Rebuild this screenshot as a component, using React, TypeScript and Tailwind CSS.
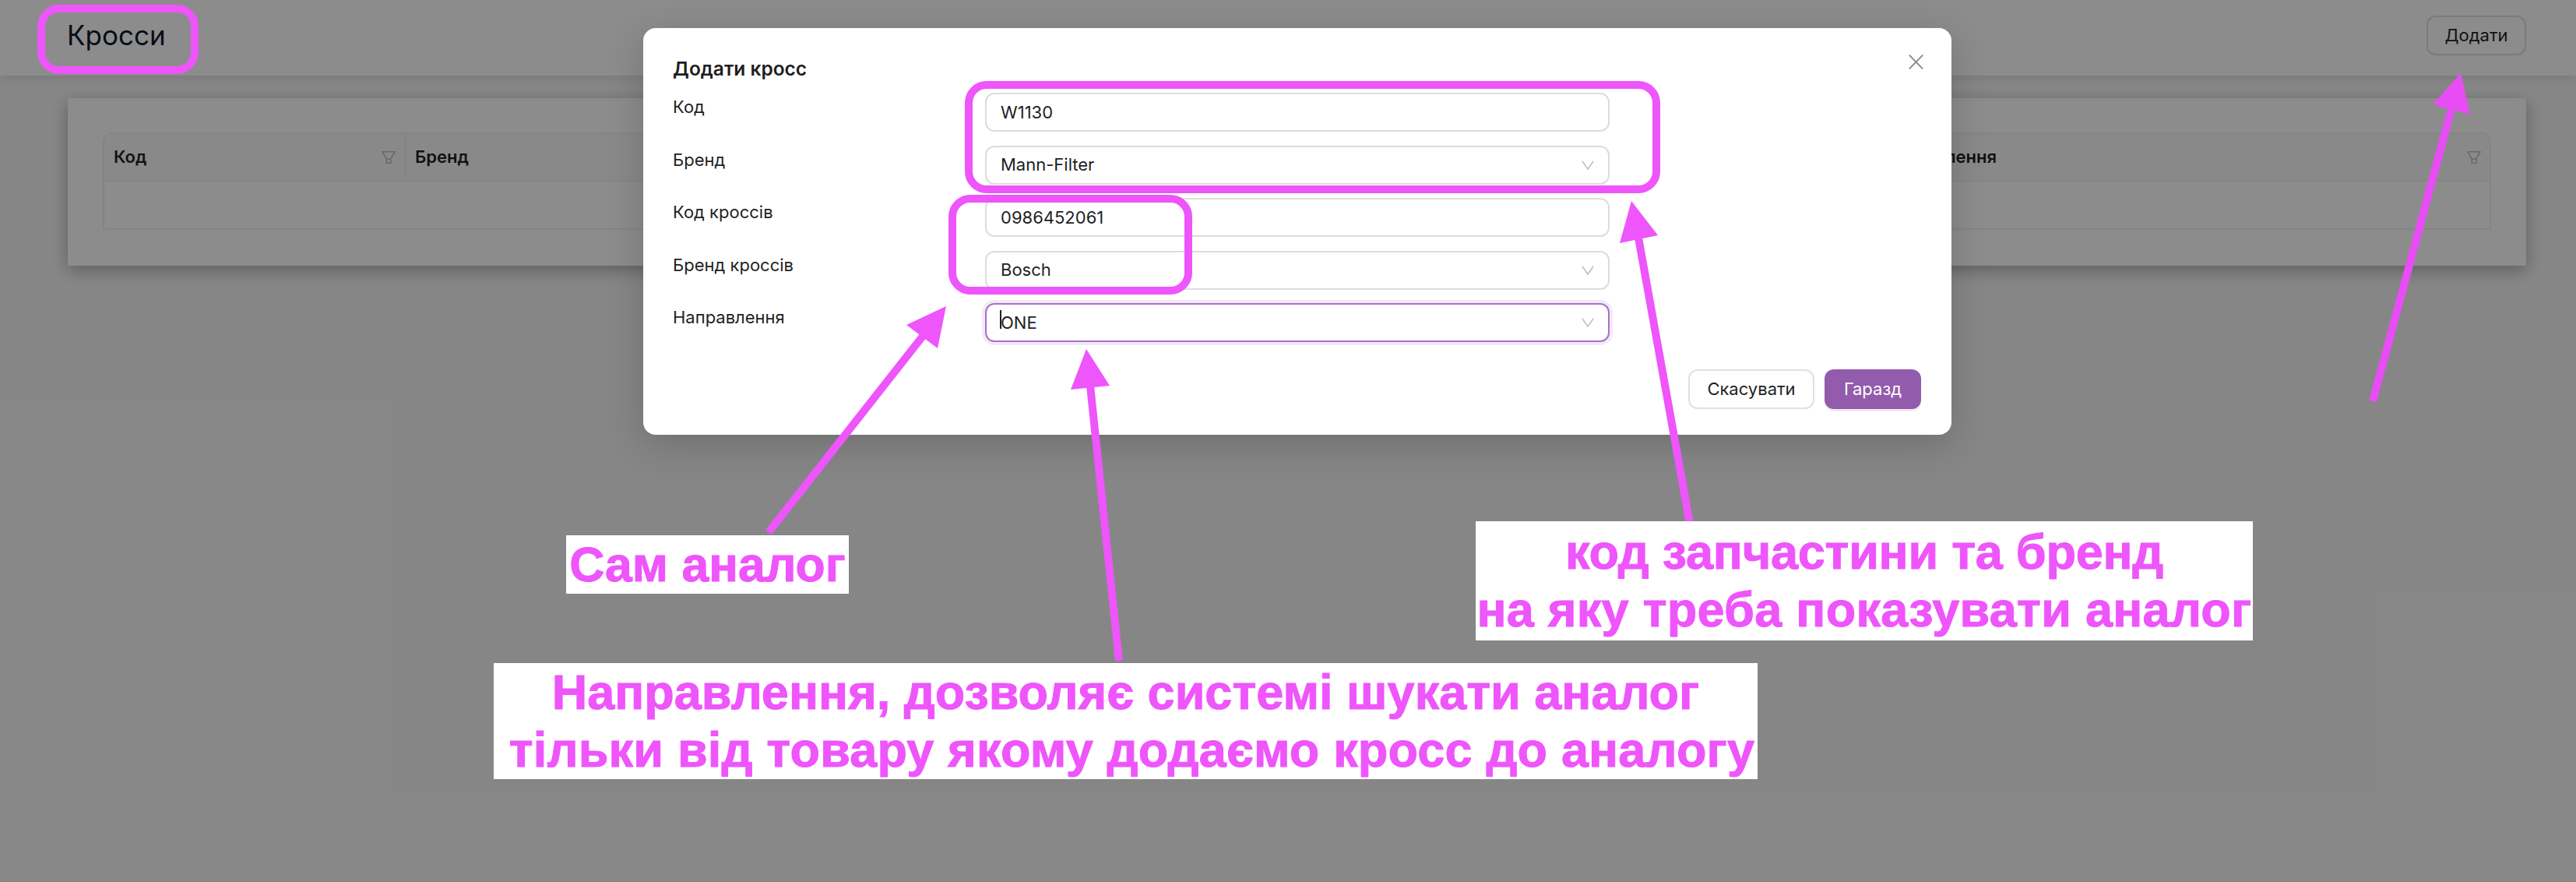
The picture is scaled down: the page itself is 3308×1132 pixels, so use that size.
import { ReactNode } from 'react';

const PINK = '#ee55fb';

function FilterIcon() {
  return (
    <svg viewBox="64 64 896 896" className="w-[20px] h-[20px] fill-[#bfbfbf] shrink-0">
      <path d="M880.1 154H143.9c-24.5 0-39.8 26.7-27.5 48L349 597.4V838c0 17.7 14.2 32 31.8 32h262.4c17.6 0 31.8-14.3 31.8-32V597.4L907.7 202c12.2-21.3-3.1-48-27.6-48zM603.4 798H420.6V642h182.9v156zm9.6-236.6l-9.5 16.6h-183l-9.5-16.6L212.7 226h598.6L613 561.4z" />
    </svg>
  );
}

function Chevron() {
  return (
    <svg viewBox="0 0 16 12" className="w-[16px] h-[12px] shrink-0">
      <path d="M0.8 0.8 L8 11 L15.2 0.8" fill="none" stroke="#bfbfbf" strokeWidth="1.6" />
    </svg>
  );
}

function Th({ children, filter, width, divider }: { children: string; filter?: boolean; width: string; divider?: boolean }) {
  return (
    <div className={`${width} h-full flex items-center justify-between pl-[12px] pr-[10px] ${divider ? 'border-r-2 border-[#f0f0f0]' : ''}`}>
      <span className="text-[22px] font-semibold text-[#1f1f1f]">{children}</span>
      {filter && <FilterIcon />}
    </div>
  );
}

function Field({ children, select, focused }: { children: ReactNode; select?: boolean; focused?: boolean }) {
  return (
    <div
      className={`h-[50px] flex items-center justify-between pl-[18px] pr-[18px] rounded-[12px] border-2 bg-white text-[22px] text-[#1f1f1f] ${
        focused ? 'border-[#a871c8] shadow-[0_0_0_4px_#f3e9f7]' : 'border-[#dcdcdc]'
      }`}
    >
      <span className="relative">{children}</span>
      {select && <Chevron />}
    </div>
  );
}

function Arrow({ line, head, color = PINK }: { line: number[]; head: string; color?: string }) {
  return (
    <>
      <line x1={line[0]} y1={line[1]} x2={line[2]} y2={line[3]} stroke={color} strokeWidth="10" />
      <polygon points={head} fill={color} />
    </>
  );
}

export default function App() {
  const labels = ['Код', 'Бренд', 'Код кроссів', 'Бренд кроссів', 'Направлення'];

  return (
    <div className="relative w-[3308px] h-[1132px] overflow-hidden bg-[#f5f5f5] font-['Inter',sans-serif]">
      {/* page under the mask */}
      <header className="h-[97px] bg-white flex items-center justify-between pl-[86px] pr-[64px] pb-[6px] shadow-[0_2px_12px_rgba(0,0,0,0.12)]">
        <h1 className="text-[35px] font-normal text-[#101828]">Кросси</h1>
        <button className="w-[128px] h-[51px] rounded-[12px] border-2 border-[#e0e0e0] bg-white text-[22px] text-[#1f1f1f] shadow-[0_2px_0_rgba(0,0,0,0.02)]">
          Додати
        </button>
      </header>
      <main className="pt-[29px] pl-[87px] pr-[64px]">
        <div className="bg-white pt-[44px] pb-[46px] px-[45px] shadow-[0_6px_20px_rgba(0,0,0,0.3)]">
          <div className="border-2 border-[#f0f0f0] rounded-t-[12px]">
            <div className="h-[61px] flex bg-[#fafafa] border-b-2 border-[#f0f0f0] rounded-t-[12px]">
              <Th width="w-[387px]" filter divider>Код</Th>
              <Th width="w-[628px]">Бренд</Th>
              <Th width="w-[628px]">Код кроссів</Th>
              <Th width="w-[628px]">Бренд кроссів</Th>
              <Th width="flex-1" filter>Направлення</Th>
            </div>
            <div className="h-[60px]" />
          </div>
        </div>
      </main>

      {/* modal */}
      <div className="absolute inset-0 bg-black/45 pt-[36px] pl-[826px]">
        <div className="relative w-[1680px] bg-white rounded-[16px] pt-[36px] pb-[33px] pl-[38px] pr-[39px] shadow-[0_12px_48px_rgba(0,0,0,0.18)]">
          <svg viewBox="0 0 19 19" className="absolute right-[36px] top-[34px] w-[19px] h-[19px]">
            <path d="M0.8 0.5 L18.2 18.5 M18.2 0.5 L0.8 18.5" stroke="#8c8c8c" strokeWidth="1.8" fill="none" />
          </svg>
          <h2 className="h-[32px] leading-[32px] text-[24.5px] font-semibold text-[#1f1f1f] mb-[15px]">Додати кросс</h2>
          <div className="flex flex-col gap-[17.5px] w-[1203px]">
            {labels.map((label, i) => (
              <div key={label} className="grid grid-cols-[401px_802px] h-[50px]">
                <label className="text-[22px] leading-[36px] text-[#1f1f1f]">{label}</label>
                {i === 0 && <Field>W1130</Field>}
                {i === 1 && <Field select>Mann-Filter</Field>}
                {i === 2 && <Field>0986452061</Field>}
                {i === 3 && <Field select>Bosch</Field>}
                {i === 4 && (
                  <Field select focused>
                    ONE
                    <span className="absolute left-[-1px] top-[0px] w-[1.5px] h-[24px] bg-[#1f1f1f]" />
                  </Field>
                )}
              </div>
            ))}
          </div>
          <div className="flex justify-end gap-[13px] mt-[35px]">
            <button className="w-[162px] h-[51px] rounded-[12px] border-2 border-[#e0e0e0] bg-white text-[22px] text-[#1f1f1f]">
              Скасувати
            </button>
            <button className="w-[124px] h-[51px] rounded-[12px] bg-[#935bab] text-[22px] text-white shadow-[0_3px_0_#f3e9f7]">
              Гаразд
            </button>
          </div>
        </div>
      </div>

      {/* annotations drawn over the screenshot */}
      <div className="absolute left-[48px] top-[6px] w-[207px] h-[89px] border-[10px] border-[#ee55fb] rounded-[28px]" />
      <div className="absolute left-[1239px] top-[104px] w-[893px] h-[144px] border-[10px] border-[#ee55fb] rounded-[28px]" />
      <div className="absolute left-[1218px] top-[250px] w-[313px] h-[128px] border-[10px] border-[#ee55fb] rounded-[28px]" />

      <svg viewBox="0 0 3308 1132" className="absolute inset-0 w-[3308px] h-[1132px] pointer-events-none">
        <Arrow line={[987, 683, 1190, 425]} head="1215,393 1164,417 1204,447" />
        <Arrow line={[1437, 848, 1400, 495]} head="1395,448 1375,500 1425,495" />
        <Arrow line={[2170, 672, 2104, 305]} head="2095,258 2080,312 2129,302" />
        <Arrow line={[3047, 515, 3148, 140]} head="3160,94 3124,134 3172,147" color="#e84df5" />
      </svg>

      <div className="absolute left-[727px] top-[687px] w-[363px] h-[75px] bg-white flex items-center justify-center font-['Liberation_Sans',sans-serif] font-bold text-[62.5px] [-webkit-text-stroke:1px_#ee55fb] text-[#ee55fb] whitespace-nowrap">
        Сам аналог
      </div>
      <div className="absolute left-[634px] top-[851px] w-[1623px] h-[149px] bg-white text-center font-['Liberation_Sans',sans-serif] font-bold text-[63px] leading-[74px] [-webkit-text-stroke:1px_#ee55fb] text-[#ee55fb] whitespace-nowrap">
        <div>Направлення, дозволяє системі шукати аналог</div>
        <div className="pl-[16px] tracking-[0.17px]">тільки від товару якому додаємо кросс до аналогу</div>
      </div>
      <div className="absolute left-[1895px] top-[669px] w-[998px] h-[153px] bg-white text-center pt-[2px] font-['Liberation_Sans',sans-serif] font-bold text-[63px] leading-[74px] [-webkit-text-stroke:1px_#ee55fb] text-[#ee55fb] whitespace-nowrap">
        <div className="tracking-[-0.25px]">код запчастини та бренд</div>
        <div className="tracking-[0.27px]">на яку треба показувати аналог</div>
      </div>
    </div>
  );
}
